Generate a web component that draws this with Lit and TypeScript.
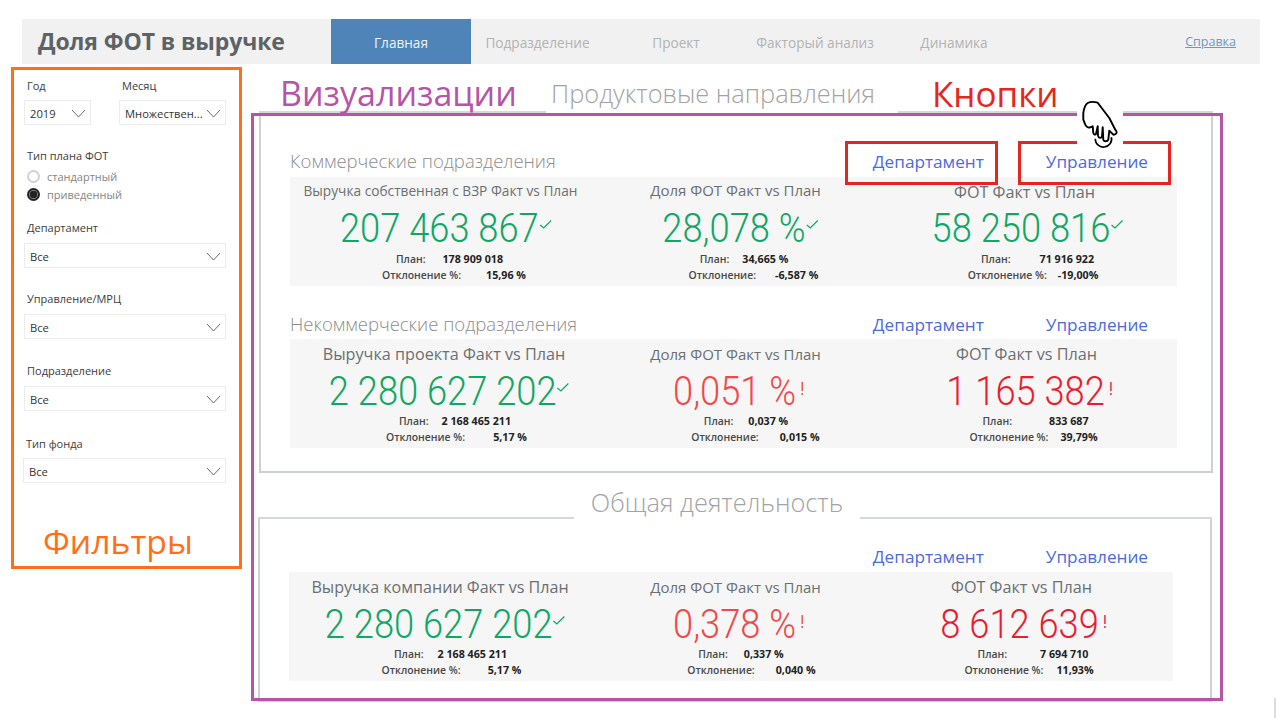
import { LitElement, html, css, svg } from "lit";
import { customElement } from "lit/decorators.js";

type Line = { lab: string; val: string; l: number; lr: number; vl: number; vr: number };
type Kpi = {
  title: string; tl: number; tr: number; ts?: number; tdy?: number;
  value: string; vl: number; vr: number; ok: boolean; soft?: boolean;
  plan: Line; dev: Line;
};
type Panel = { left: number; width: number; low: boolean; kpis: Kpi[] };

const L = (lab: string, val: string, l: number, lr: number, vl: number, vr: number): Line => ({ lab, val, l, lr, vl, vr });

const rows: Panel[] = [
  { left: 290, width: 887, low: false, kpis: [
    { title: "Выручка собственная с ВЗР Факт vs План", tl: 304, tr: 577, ts: 13.7, value: "207 463 867", vl: 341, vr: 538, ok: true,
      plan: L("План:", "178 909 018", 395, 426, 443, 504), dev: L("Отклонение %:", "15,96 %", 383, 461, 486, 525) },
    { title: "Доля ФОТ Факт vs План", tl: 650, tr: 821, value: "28,078 %", vl: 661, vr: 806, ok: true,
      plan: L("План:", "34,665 %", 700, 730, 743, 788), dev: L("Отклонение:", "-6,587 %", 688, 757, 776, 819) },
    { title: "ФОТ Факт vs План", tl: 954, tr: 1095, ts: 16.2, tdy: 2, value: "58 250 816", vl: 932, vr: 1110, ok: true,
      plan: L("План:", "71 916 922", 981, 1011, 1040, 1094), dev: L("Отклонение %:", "-19,00%", 968, 1047, 1058, 1098) },
  ]},
  { left: 290, width: 887, low: true, kpis: [
    { title: "Выручка проекта Факт vs План", tl: 323, tr: 565, ts: 16.2, value: "2 280 627 202", vl: 329, vr: 556, ok: true,
      plan: L("План:", "2 168 465 211", 399, 429, 442, 511), dev: L("Отклонение %:", "5,17 %", 387, 465, 493, 526) },
    { title: "Доля ФОТ Факт vs План", tl: 650, tr: 821, value: "0,051 %", vl: 672, vr: 797, ok: false, soft: true,
      plan: L("План:", "0,037 %", 704, 733, 748, 788), dev: L("Отклонение:", "0,015 %", 692, 759, 780, 819) },
    { title: "ФОТ Факт vs План", tl: 956, tr: 1097, ts: 16.2, value: "1 165 382", vl: 949, vr: 1103, ok: false,
      plan: L("План:", "833 687", 982, 1012, 1049, 1089), dev: L("Отклонение %:", "39,79%", 970, 1048, 1060, 1097) },
  ]},
  { left: 289, width: 884, low: true, kpis: [
    { title: "Выручка компании Факт vs План", tl: 311, tr: 569, ts: 16.1, value: "2 280 627 202", vl: 325, vr: 553, ok: true,
      plan: L("План:", "2 168 465 211", 394, 424, 438, 507), dev: L("Отклонение %:", "5,17 %", 382, 461, 488, 521) },
    { title: "Доля ФОТ Факт vs План", tl: 650, tr: 821, value: "0,378 %", vl: 672, vr: 797, ok: false, soft: true,
      plan: L("План:", "0,337 %", 699, 729, 745, 783), dev: L("Отклонение:", "0,040 %", 688, 755, 776, 815) },
    { title: "ФОТ Факт vs План", tl: 951, tr: 1092, ts: 16.2, value: "8 612 639", vl: 941, vr: 1099, ok: false,
      plan: L("План:", "7 694 710", 978, 1007, 1040, 1088), dev: L("Отклонение %:", "11,93%", 966, 1044, 1057, 1092) },
  ]},
];

const shift = (cx: number, colCx: number) => {
  const d = 2 * (cx - colCx);
  return d >= 0 ? `padding-left:${d}px` : `padding-right:${-d}px`;
};

const chevron = svg`<path d="M1 1 L7.5 8 L14 1" fill="none" stroke="#6b6b6b" stroke-width="1"/>`;

@customElement("app-root")
export class AppRoot extends LitElement {
  static styles = css`
    :host { display: block; width: 1276px; height: 718px; position: relative; overflow: hidden; background: #fff;
      font-family: "Open Sans", "Noto Sans", sans-serif; color: #444; }
    .top { display: flex; align-items: stretch; height: 45px; margin: 19px 16px 0 22px; background: #f1f1f1; }
    .brand { width: 309px; box-sizing: border-box; padding-left: 16px; font: 700 23px/45px "Open Sans", sans-serif; color: #5c6265; white-space: nowrap; letter-spacing: -0.1px; }
    .tab { width: 140px; text-align: center; font-size: 13.6px; line-height: 47px; color: #b2b2b2; white-space: nowrap; }
    .tab.on { background: #4f84b8; color: #eef3f8; }
    .tab.t2 { width: 133px; }
    .tab.t3 { width: 144px; }
    .tab.t4 { width: 134px; }
    .tab.t5 { width: 144px; }
    .help { margin-left: auto; margin-right: 24px; font-size: 12.5px; line-height: 45px; color: #6b98c9; text-decoration: underline; }

    .content { display: flex; align-items: flex-start; padding-left: 11px; }
    .side { box-sizing: border-box; width: 231px; height: 502px; margin-top: 3px; border: 3px solid #ff6f1a; padding: 9px 13px 0 10px; display: flex; flex-direction: column; }
    .lab { font-size: 11px; line-height: 14px; color: #3c3c3c; padding-left: 3px; }
    .duo { display: flex; gap: 28px; }
    .duo > div:first-child { width: 67px; }
    .duo > div:last-child { width: 107px; }
    .dd { box-sizing: border-box; height: 25px; margin-top: 8px; border: 1px solid #ececec; display: flex; align-items: center; justify-content: space-between; padding: 2px 4px 0 5px; font-size: 11.2px; color: #333; white-space: nowrap; background: #fff; }
    .duo .dd { margin-top: 7px; }
    .dd svg { flex: none; }
    .radio { display: flex; align-items: center; gap: 7px; height: 18px; padding-left: 3px; font-size: 11px; color: #858585; }
    .radio.first { margin-top: 4px; }
    .dot { box-sizing: border-box; width: 13px; height: 13px; border-radius: 50%; border: 2px solid #d2d2d2; }
    .dot.on { border: 2px solid #222; background: radial-gradient(circle, #222 0 3.5px, #888 4px); }
    .g1 { margin-top: 24px; }
    .g2 { margin-top: 18px; }
    .g4 { margin-top: 24px; }
    .g5 { margin-top: 25px; }
    .g6 { margin-top: 26px; margin-left: -1px; }
    .g6 .dd { margin-top: 7px; }

    main { width: 954px; margin-left: 17px; }
    .leg { display: flex; align-items: flex-end; }
    .leg i { display: block; border-top: 2px solid #d5d9d7; }
    .leg i:last-child { flex: 1; }
    .leg span { box-sizing: border-box; font-size: 25.4px; font-weight: 300; color: #a3a3a3; line-height: 34px; white-space: nowrap; }
    .leg.a { height: 49px; }
    .leg.a i:first-child { width: 287px; }
    .leg.a span { width: 352px; padding-left: 5px; margin-bottom: 3px; }
    .leg.b { height: 46px; margin-left: -1px; margin-right: 1px; }
    .leg.b i:first-child { width: 316px; }
    .leg.b span { width: 286px; text-align: center; }
    .body { border: 2px solid #cdd2d0; border-top: 0; box-sizing: border-box; }
    .body.a { height: 360px; padding: 37px 34px 0 29px; }
    .body.b { height: 183px; padding: 26px 37px 0 29px; margin-left: -1px; margin-right: 1px; }
    .hd { height: 27px; display: flex; align-items: center; font-size: 18.5px; font-weight: 300; color: #8d8d8d; white-space: nowrap; padding: 0 29px 5px 0; box-sizing: border-box; }
    .hd span { margin-bottom: 2px; }
    .body.b .hd { padding: 0 25px 4px 0; }
    .hd.second { margin-top: 26px; padding-bottom: 3px; }
    .hd a { font-weight: 400; color: #4c6ae0; font-size: 17.2px; }
    .hd a.first { margin-left: auto; margin-right: 62px; }
    .panel { height: 109px; background: #f6f6f6; display: grid; grid-template-columns: repeat(3, 1fr); }
    .kpi { min-width: 0; display: flex; flex-direction: column; }
    .ln { display: flex; justify-content: center; white-space: nowrap; box-sizing: border-box; }
    .ttl { height: 28px; line-height: 27px; font-size: 15px; color: #6c6f72; }
    .val { height: 46px; align-items: center; }
    .low .ttl { height: 26px; margin-top: 2px; }
    .low .val { padding-top: 2px; }
    .num { display: inline-block; font: 300 41px/46px Roboto, sans-serif; position: relative; transform: scaleX(0.885); }
    .num.ok { color: #10a765; }
    .num.bad { color: #ec1c30; }
    .num.soft { color: #f2484a; }
    .mark { position: absolute; left: 100%; top: 14px; transform: scaleX(1.13); }
    .mark.chk { margin-left: 1px; }
    .mark.exc { margin-left: 5px; }
    .sub { height: 16px; font-size: 10.4px; line-height: 16px; font-weight: 600; color: #484848; }
    .sub b { font-size: 10.7px; font-weight: 700; color: #222; }

    .ov { position: absolute; box-sizing: border-box; pointer-events: none; }
    .purple { left: 251px; top: 113px; width: 972px; height: 588px; border: 3px solid #b455a8; }
    .red { top: 141px; width: 153px; height: 44px; border: 3px solid #e52620; }
    .red.r1 { left: 845px; }
    .red.r2 { left: 1018px; }
    .label { line-height: 44px; white-space: nowrap; }
    .l1 { left: 280px; top: 71px; color: #b455a8; font-size: 34px; }
    .l2 { left: 932px; top: 72px; color: #e52620; font-size: 35px; }
    .l3 { left: 43px; top: 519px; color: #ff6f1a; font-size: 33.7px; }
    .hand { left: 1077px; top: 100px; width: 46px; height: 50px; background: #fff; }
    .hand svg { display: block; }
    .corner { right: 0; top: 698px; width: 2px; height: 20px; background: #dcdcdc; }
  `;

  private kpi(k: Kpi, colCx: number) {
    const line = (x: Line) => html`<div class="ln sub" style="${shift((x.l + x.vr) / 2, colCx)}">
      <span>${x.lab}</span><b style="margin-left:${x.vl - x.lr}px">${x.val}</b></div>`;
    const ttl = `${shift((k.tl + k.tr) / 2, colCx)};${k.ts ? `font-size:${k.ts}px;` : ""}${k.tdy ? `line-height:${27 + 2 * k.tdy}px;` : ""}`;
    return html`<div class="kpi">
      <div class="ln ttl" style="${ttl}">${k.title}</div>
      <div class="ln val" style="${shift((k.vl + k.vr) / 2, colCx)}">
        <span class="num ${k.ok ? "ok" : "bad"} ${k.soft ? "soft" : ""}">${k.value}${k.ok
          ? html`<svg class="mark chk" width="13" height="11" viewBox="0 0 13 11"><path d="M1 6 L4.500 9 L12 1.500" fill="none" stroke="#10a765" stroke-width="1.2"/></svg>`
          : html`<svg class="mark exc" width="4" height="14" viewBox="0 0 4 14"><path d="M2 0 V9 M2 11 V13" fill="none" stroke="currentColor" stroke-width="1.4"/></svg>`}</span>
      </div>
      ${line(k.plan)}
      ${line(k.dev)}
    </div>`;
  }

  private panel(p: Panel) {
    const w = p.width / 3;
    return html`<div class="panel ${p.low ? "low" : ""}">${p.kpis.map((k, i) => this.kpi(k, p.left + w * i + w / 2))}</div>`;
  }

  render() {
    return html`
      <div class="top">
        <div class="brand">Доля ФОТ в выручке</div>
        <div class="tab on">Главная</div>
        <div class="tab t2">Подразделение</div>
        <div class="tab t3">Проект</div>
        <div class="tab t4">Факторый анализ</div>
        <div class="tab t5">Динамика</div>
        <div class="help">Справка</div>
      </div>
      <div class="content">
        <aside class="side">
          <div class="duo">
            <div><div class="lab">Год</div><div class="dd">2019 <svg width="15" height="9">${chevron}</svg></div></div>
            <div><div class="lab">Месяц</div><div class="dd">Множествен... <svg width="15" height="9">${chevron}</svg></div></div>
          </div>
          <div class="lab g1">Тип плана ФОТ</div>
          <div class="radio first"><span class="dot"></span>стандартный</div>
          <div class="radio"><span class="dot on"></span>приведенный</div>
          <div class="g2"><div class="lab">Департамент</div><div class="dd">Все <svg width="15" height="9">${chevron}</svg></div></div>
          <div class="g4"><div class="lab">Управление/МРЦ</div><div class="dd">Все <svg width="15" height="9">${chevron}</svg></div></div>
          <div class="g5"><div class="lab">Подразделение</div><div class="dd">Все <svg width="15" height="9">${chevron}</svg></div></div>
          <div class="g6"><div class="lab">Тип фонда</div><div class="dd">Все <svg width="15" height="9">${chevron}</svg></div></div>
        </aside>
        <main>
          <div class="leg a"><i></i><span>Продуктовые направления</span><i></i></div>
          <div class="body a">
            <div class="hd"><span>Коммерческие подразделения</span><a class="first">Департамент</a><a>Управление</a></div>
            ${this.panel(rows[0])}
            <div class="hd second"><span>Некоммерческие подразделения</span><a class="first">Департамент</a><a>Управление</a></div>
            ${this.panel(rows[1])}
          </div>
          <div class="leg b"><i></i><span>Общая деятельность</span><i></i></div>
          <div class="body b">
            <div class="hd"><a class="first">Департамент</a><a>Управление</a></div>
            ${this.panel(rows[2])}
          </div>
        </main>
      </div>
      <div class="ov purple"></div>
      <div class="ov red r1"></div>
      <div class="ov red r2"></div>
      <div class="ov hand">
        <svg width="46" height="50" viewBox="0 0 46 50"><path d="M6.300 19.700 L6.300 13 C7 8 9 4 10.700 3 C13 1.800 17 1.500 20.700 2.700 L32.300 18 L38.300 29.700 C40.500 32 40 34.500 36.300 34.700 L32.300 30.700 L31.300 39.700 C30.500 41.800 27 41.800 26.300 39.700 L25.700 27.300 L25 36.300 C24.500 38.500 21.500 38.500 21 35.700 L20.700 26.300 L19 34 C18.500 35 16.800 34.800 16.300 33 L15.700 26.300 L13 27.300 C11.500 28 9.500 27.300 8.300 24.700 Z" fill="#fff" stroke="#000" stroke-width="1.900" stroke-linejoin="round"/><path d="M18.300 38.700 C18.300 45 24 47.300 27.300 47 C32 46.300 35.700 42 34.300 37.300" fill="none" stroke="#000" stroke-width="1.700"/></svg>
      </div>
      <div class="ov label l1">Визуализации</div>
      <div class="ov label l2">Кнопки</div>
      <div class="ov label l3">Фильтры</div>
      <div class="ov corner"></div>
    `;
  }
}
